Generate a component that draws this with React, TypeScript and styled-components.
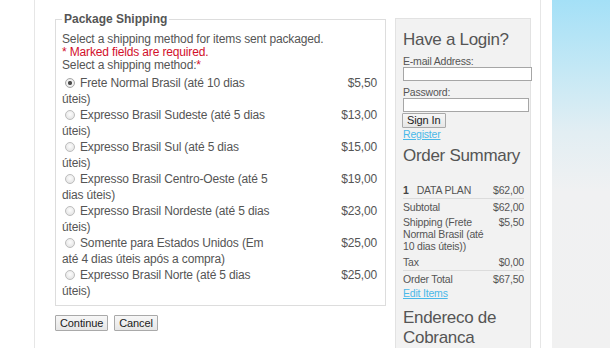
import React from 'react';
import styled, { createGlobalStyle } from 'styled-components';

const GlobalStyle = createGlobalStyle`
  html, body {
    margin: 0;
    padding: 0;
    background: #ffffff;
  }
  body {
    font-family: "Liberation Sans", Arial, sans-serif;
    color: #555555;
  }
`;

const Page = styled.div`
  display: flex;
  height: 348px;
  overflow: hidden;
`;

const Gutter = styled.div`
  width: 34px;
  flex-shrink: 0;
`;

const Main = styled.div`
  width: 507px;
  flex-shrink: 0;
  box-sizing: border-box;
  display: flex;
  align-items: flex-start;
  gap: 9px;
  padding: 12px 9px 0 20px;
  border-left: 1px solid #e6e6e6;
  border-right: 1px solid #e6e6e6;
`;

const Spacer = styled.div`
  width: 11px;
  flex-shrink: 0;
`;

const Sky = styled.div`
  flex: 1;
  background: linear-gradient(180deg, #a4e0f7 0%, #c4e8f5 20%, #e2eef3 38%, #f0f1f2 55%, #f1f1f1 100%);
`;

const Column = styled.div`
  width: 331px;
  flex-shrink: 0;
`;

const Fieldset = styled.fieldset`
  margin: 0;
  min-width: 0;
  box-sizing: border-box;
  width: 331px;
  padding: 7px 6px 6px 6px;
  border: 1px solid #dddddd;
  font-size: 12px;
  letter-spacing: -0.15px;
`;

const Legend = styled.legend`
  padding: 0 2px;
  font-size: 12px;
  line-height: 14px;
  font-weight: bold;
  color: #555555;
  letter-spacing: 0;
`;

const Line = styled.div<{ $alert?: boolean }>`
  line-height: 13px;
  color: ${({ $alert }) => ($alert ? '#d2102b' : '#555555')};
`;

const Star = styled.span`
  color: #d2102b;
`;

const MethodTable = styled.table`
  width: 100%;
  border-collapse: collapse;
  margin-top: 3px;
`;

const MethodCell = styled.td`
  padding: 0;
  line-height: 16px;
  vertical-align: top;
  white-space: nowrap;
`;

const PriceCell = styled.td`
  padding: 0 2px 0 0;
  line-height: 16px;
  vertical-align: top;
  text-align: right;
  white-space: nowrap;
`;

const Radio = styled.input`
  appearance: none;
  width: 10px;
  height: 10px;
  margin: 0 5px 0 3px;
  border: 1px solid #bdbdbd;
  border-radius: 50%;
  background: radial-gradient(circle at 50% 40%, #fdfdfd 0%, #dedede 100%);
  box-sizing: border-box;
  vertical-align: -1px;

  &:checked {
    background: radial-gradient(circle, #444444 0, #555555 1.7px, #f4f4f4 2.5px, #dadada 100%);
    border-color: #a8a8a8;
  }
`;

const Actions = styled.div`
  display: flex;
  gap: 6px;
  margin-top: 9px;
`;

const Button = styled.button`
  height: 16px;
  padding: 0 4px;
  font-family: "Liberation Sans", Arial, sans-serif;
  font-size: 11px;
  line-height: 14px;
  letter-spacing: -0.1px;
  color: #1a1a1a;
  border: 1px solid #a9a9a9;
  border-radius: 1px;
  background: linear-gradient(180deg, #f7f7f7 0%, #e6e6e6 100%);
`;

const Sidebar = styled.aside`
  width: 136px;
  flex-shrink: 0;
  box-sizing: border-box;
  margin-top: 6px;
  height: 340px;
  padding: 11px 0 0 7px;
  background: #f2f2f2;
  border: 1px solid #e2e2e2;
  font-size: 10.5px;
  letter-spacing: -0.2px;
  line-height: 12px;
`;

const Heading = styled.h2<{ $gapTop?: number; $gapBottom?: number }>`
  margin: ${({ $gapTop = 0 }) => $gapTop}px 0 ${({ $gapBottom = 0 }) => $gapBottom}px;
  font-size: 17px;
  line-height: 20px;
  font-weight: normal;
  letter-spacing: -0.3px;
  color: #555555;
`;

const Label = styled.label`
  display: block;
`;

const TextInput = styled.input<{ $w: number }>`
  display: block;
  width: ${({ $w }) => $w}px;
  height: 14px;
  box-sizing: border-box;
  margin: 0 0 5px;
  padding: 0 2px;
  border: 1px solid #a6a6a6;
  background: #ffffff;
`;

const SmallButton = styled(Button)`
  height: 15px;
  margin: -4px 0 0 -1px;
  padding: 0 4px;
  font-size: 11px;
  line-height: 13px;
  display: block;
`;

const Link = styled.a<{ $gapTop?: number }>`
  display: block;
  margin-top: ${({ $gapTop = 0 }) => $gapTop}px;
  color: #4ab8e8;
  text-decoration: underline;
`;

const SummaryTable = styled.table`
  width: 121px;
  border-collapse: collapse;
`;

const SummaryRow = styled.tr<{ $rule?: boolean; $lead?: number }>`
  border-bottom: ${({ $rule }) => ($rule ? '1px solid #dcdcdc' : 'none')};

  td {
    padding: ${({ $lead = 2 }) => $lead}px 0 ${({ $rule }) => ($rule ? 2 : 1)}px;
    vertical-align: top;
  }
`;

const AmountCell = styled.td`
  text-align: right;
  white-space: nowrap;
  width: 30px;
`;

const Qty = styled.b`
  margin-right: 8px;
  color: #444444;
`;

const methods = [
  { lines: ['Frete Normal Brasil (até 10 dias', 'úteis)'], price: '$5,50' },
  { lines: ['Expresso Brasil Sudeste (até 5 dias', 'úteis)'], price: '$13,00' },
  { lines: ['Expresso Brasil Sul (até 5 dias', 'úteis)'], price: '$15,00' },
  { lines: ['Expresso Brasil Centro-Oeste (até 5', 'dias úteis)'], price: '$19,00' },
  { lines: ['Expresso Brasil Nordeste (até 5 dias', 'úteis)'], price: '$23,00' },
  { lines: ['Somente para Estados Unidos (Em', 'até 4 dias úteis após a compra)'], price: '$25,00' },
  { lines: ['Expresso Brasil Norte (até 5 dias', 'úteis)'], price: '$25,00' },
];

export default function App() {
  return (
    <>
      <GlobalStyle />
      <Page>
        <Gutter />
        <Main>
          <Column>
            <Fieldset>
              <Legend>Package Shipping</Legend>
              <Line>Select a shipping method for items sent packaged.</Line>
              <Line $alert>* Marked fields are required.</Line>
              <Line>
                Select a shipping method:<Star>*</Star>
              </Line>
              <MethodTable>
                <tbody>
                  {methods.map((m, i) => (
                    <tr key={m.lines[0]}>
                      <MethodCell>
                        <Radio type="radio" name="ship" defaultChecked={i === 0} />
                        {m.lines[0]}
                        <br />
                        {m.lines[1]}
                      </MethodCell>
                      <PriceCell>{m.price}</PriceCell>
                    </tr>
                  ))}
                </tbody>
              </MethodTable>
            </Fieldset>
            <Actions>
              <Button>Continue</Button>
              <Button>Cancel</Button>
            </Actions>
          </Column>
          <Sidebar>
            <Heading $gapBottom={5}>Have a Login?</Heading>
            <Label>E-mail Address:</Label>
            <TextInput $w={129} type="text" />
            <Label>Password:</Label>
            <TextInput $w={126} type="password" />
            <SmallButton>Sign In</SmallButton>
            <Link href="#">Register</Link>
            <Heading $gapTop={6} $gapBottom={16}>Order Summary</Heading>
            <SummaryTable>
              <tbody>
                <SummaryRow $rule>
                  <td>
                    <Qty>1</Qty>DATA PLAN
                  </td>
                  <AmountCell>$62,00</AmountCell>
                </SummaryRow>
                <SummaryRow>
                  <td>Subtotal</td>
                  <AmountCell>$62,00</AmountCell>
                </SummaryRow>
                <SummaryRow>
                  <td>Shipping (Frete Normal Brasil (até 10 dias úteis))</td>
                  <AmountCell>$5,50</AmountCell>
                </SummaryRow>
                <SummaryRow $rule $lead={3}>
                  <td>Tax</td>
                  <AmountCell>$0,00</AmountCell>
                </SummaryRow>
                <SummaryRow>
                  <td>Order Total</td>
                  <AmountCell>$67,50</AmountCell>
                </SummaryRow>
              </tbody>
            </SummaryTable>
            <Link href="#" $gapTop={1}>Edit Items</Link>
            <Heading $gapTop={9}>
              Endereco de
              <br />
              Cobranca
            </Heading>
          </Sidebar>
        </Main>
        <Spacer />
        <Sky />
      </Page>
    </>
  );
}
